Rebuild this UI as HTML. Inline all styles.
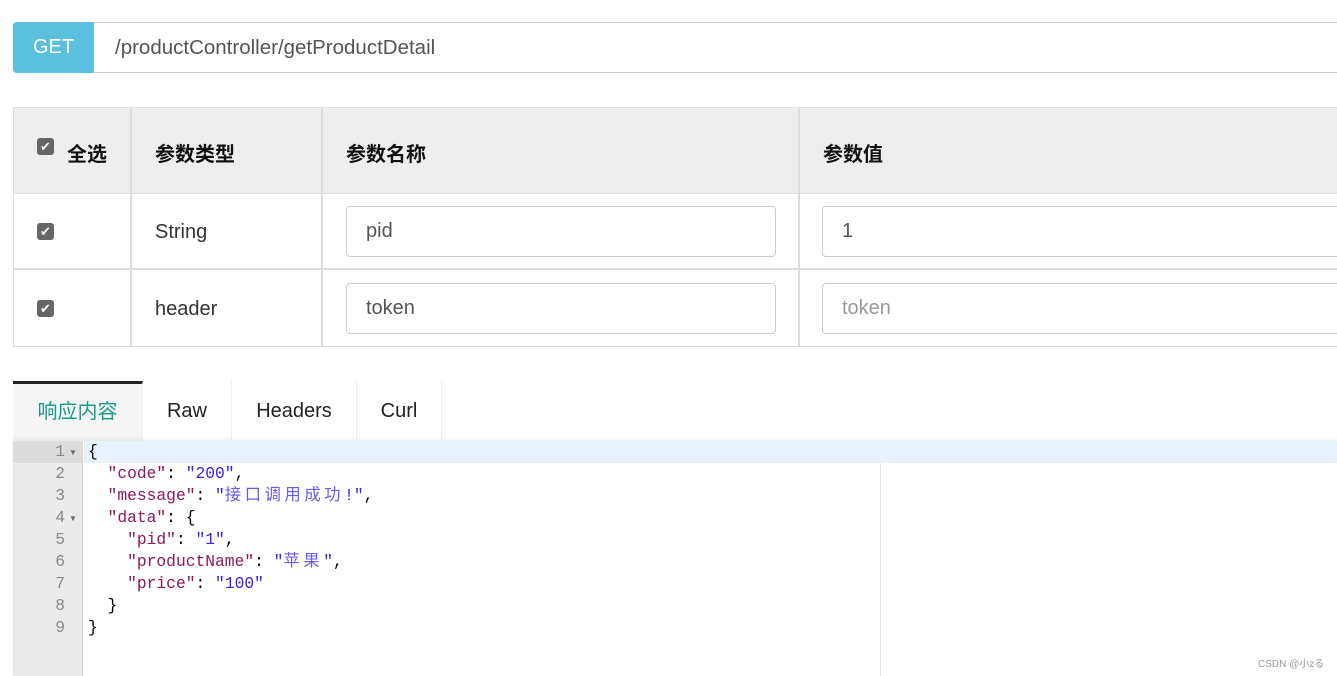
<!DOCTYPE html>
<html><head><meta charset="utf-8"><style>
*{box-sizing:border-box;margin:0;padding:0}
body{width:1337px;height:676px;overflow:hidden;background:#fff;font-family:"Liberation Sans","Noto Sans CJK SC",sans-serif;position:relative;color:#333}
.a{position:absolute}
.get{left:13px;top:22px;width:81px;height:51px;background:#5bc0de;border-radius:4px 0 0 4px;color:#fff;font-size:20px;line-height:51px;text-align:center}
.url{left:93px;top:22px;width:1260px;height:51px;border:1px solid #ccc;border-left:none;font-size:20.5px;line-height:49px;padding-left:22px;color:#555}
.hd{left:13px;top:107px;width:1340px;height:87px;background:#eee;border:1px solid #ddd}
.vl{width:2px;background:#ddd}
.hl{height:2px;background:#ddd;left:13px;width:1330px}
.th{font-size:20px;font-weight:bold;color:#111;top:138px}
.td{font-size:20px;color:#333}
.cb{width:17px;height:17px;background:#666;border-radius:3px;color:#fff;font-size:13px;line-height:17px;text-align:center}
.inp{height:51px;border:1px solid #ccc;border-radius:4px;font-size:20px;line-height:49px;padding-left:19px;color:#555}
.tab{top:381px;height:60px;font-size:20px;line-height:60px;text-align:center;color:#222;border-right:1px solid #eee}
.code{font-family:"Liberation Mono","Noto Sans CJK SC",monospace;font-size:16.3px;line-height:22px;white-space:pre}
.k{color:#8b1a5e}.s{color:#3a22e0}.c{color:#6a5ae8;letter-spacing:3.6px}
</style></head><body>
<div class="a get">GET</div>
<div class="a url">/productController/getProductDetail</div>
<div class="a hd"></div>
<div class="a vl" style="left:130px;top:107px;height:240px"></div>
<div class="a vl" style="left:321px;top:107px;height:240px"></div>
<div class="a vl" style="left:798px;top:107px;height:240px"></div>
<div class="a" style="left:13px;top:107px;width:1px;height:240px;background:#ddd"></div>
<div class="a hl" style="top:268px"></div>
<div class="a" style="left:13px;top:346px;width:1330px;height:1px;background:#ddd"></div>
<div class="a cb" style="left:37px;top:138px">✔</div>
<div class="a th" style="left:67px">全选</div>
<div class="a th" style="left:155px">参数类型</div>
<div class="a th" style="left:346px">参数名称</div>
<div class="a th" style="left:823px">参数值</div>
<div class="a cb" style="left:37px;top:223px">✔</div>
<div class="a cb" style="left:37px;top:300px">✔</div>
<div class="a td" style="left:155px;top:221px">String</div>
<div class="a td" style="left:155px;top:298px">header</div>
<div class="a inp" style="left:346px;top:206px;width:430px">pid</div>
<div class="a inp" style="left:346px;top:283px;width:430px">token</div>
<div class="a inp" style="left:822px;top:206px;width:530px">1</div>
<div class="a inp" style="left:822px;top:283px;width:530px;color:#999">token</div>
<div class="a tab" style="left:13px;width:130px;background:#f5f5f5;color:#1a9a8a;border-top:3px solid #222;line-height:57px">响应内容</div>
<div class="a tab" style="left:143px;width:89px">Raw</div>
<div class="a tab" style="left:232px;width:125px">Headers</div>
<div class="a tab" style="left:357px;width:85px">Curl</div>
<div class="a" style="left:13px;top:441px;width:1324px;height:235px;background:#fff;box-shadow:0 -2px 3px rgba(0,0,0,.06)"></div>
<div class="a" style="left:13px;top:441px;width:70px;height:235px;background:#ebebeb;border-right:1px solid #ccc"></div>
<div class="a" style="left:13px;top:441px;width:70px;height:22px;background:#dcdcdc"></div>
<div class="a" style="left:84px;top:441px;width:1253px;height:22px;background:#e8f2ff"></div>
<div class="a" style="left:880px;top:463px;width:1px;height:213px;background:#e5e5e5"></div>
<div class="a code" style="left:13px;top:441px;width:52px;text-align:right;color:#888">1
2
3
4
5
6
7
8
9</div>
<div class="a" style="left:69px;top:448px;font-size:8px;color:#666">▼</div>
<div class="a" style="left:69px;top:514px;font-size:8px;color:#666">▼</div>
<div class="a code" style="left:88px;top:441px;color:#000">{
  <span class="k">"code"</span>: <span class="s">"200"</span>,
  <span class="k">"message"</span>: <span class="s">"<span class="c">接口调用成功</span>!"</span>,
  <span class="k">"data"</span>: {
    <span class="k">"pid"</span>: <span class="s">"1"</span>,
    <span class="k">"productName"</span>: <span class="s">"<span class="c">苹果</span>"</span>,
    <span class="k">"price"</span>: <span class="s">"100"</span>
  }
}</div>
<div class="a" style="left:1258px;top:655px;font-size:10px;color:#999">CSDN @小zる</div>
</body></html>
